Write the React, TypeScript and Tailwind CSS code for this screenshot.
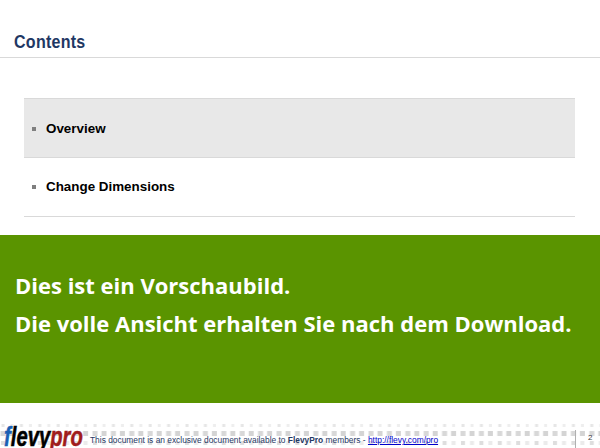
const Bullet = () => <span className="mr-[10px] h-[4px] w-[4px] bg-[#7f7f7f]" />

function Row({ label, shaded }: { label: string; shaded?: boolean }) {
  return (
    <div className={`flex h-[59px] items-center border-b border-[#d9d9d9] pl-[8px] ${shaded ? 'bg-[#e8e8e8] pt-[2px]' : ''}`}>
      <Bullet />
      <span className="text-[13.4px] font-bold text-black">{label}</span>
    </div>
  )
}

function Dots() {
  return (
    <svg className="absolute inset-0 h-full w-full" aria-hidden="true">
      <defs>
        <pattern id="dots" x="0" y="0" width="18.4" height="25" patternUnits="userSpaceOnUse">
          <rect x="1.5" y="1" width="3" height="3" fill="#e6e6e6" />
          <rect x="10.5" y="1" width="3" height="3" fill="#eeeeee" />
          <rect x="0.5" y="8" width="5" height="5" fill="#d8d8d8" />
          <rect x="9.5" y="8" width="5" height="5" fill="#d4d4d4" />
          <rect x="1" y="18" width="4" height="4" fill="#dedede" />
          <rect x="10" y="18" width="4" height="4" fill="#ebebeb" />
        </pattern>
      </defs>
      <rect x="0" y="0" width="600" height="25" fill="url(#dots)" />
    </svg>
  )
}

function App() {
  return (
    <div className="flex h-[448px] w-[600px] flex-col overflow-hidden bg-white font-['Liberation_Sans',Arial,sans-serif]">
      <header className="flex h-[58px] items-end border-b border-[#d9d9d9] pb-[4px] pl-[14px]">
        <h1 className="origin-left scale-x-[0.89] text-[18px] font-bold leading-[22px] tracking-[0.3px] text-[#1f3864]">Contents</h1>
      </header>

      <section className="ml-[24px] mr-[25px] mt-[40px] h-[137px] border-t border-[#d9d9d9]">
        <Row label="Overview" shaded />
        <Row label="Change Dimensions" />
      </section>

      <section className="flex h-[168px] flex-col gap-[6px] bg-[#5a9400] pl-[15px] pt-[34px] font-['Open_Sans',sans-serif] text-[22px] font-bold leading-[32px] text-white">
        <p>Dies ist ein Vorschaubild.</p>
        <p>Die volle Ansicht erhalten Sie nach dem Download.</p>
      </section>

      <footer className="relative mt-[20px] flex-1">
        <Dots />
        <div className="relative flex h-full items-end">
          <span className="-mb-[3px] ml-[4px] w-[86px] origin-left scale-x-[0.75] whitespace-nowrap text-[27px] font-bold italic leading-[27px] [-webkit-text-stroke:0.5px]">
            <span className="text-[#1a5fb4]">f</span>
            <span className="text-black">levy</span>
            <span className="text-[#a01c1c]">pro</span>
          </span>
          <p className="pb-[2px] text-[8.4px] leading-[12px] text-[#1f3864]">
            This document is an exclusive document available to <b>FlevyPro</b> members -{' '}
            <a className="text-[#0000cc] underline">http://flevy.com/pro</a>
          </p>
          <span className="absolute bottom-0 left-[575px] h-[18px] border-l border-[#b0b0b0] pl-[12px] text-[8px] leading-[16px] text-[#404040]">2</span>
        </div>
      </footer>
    </div>
  )
}

export default App
